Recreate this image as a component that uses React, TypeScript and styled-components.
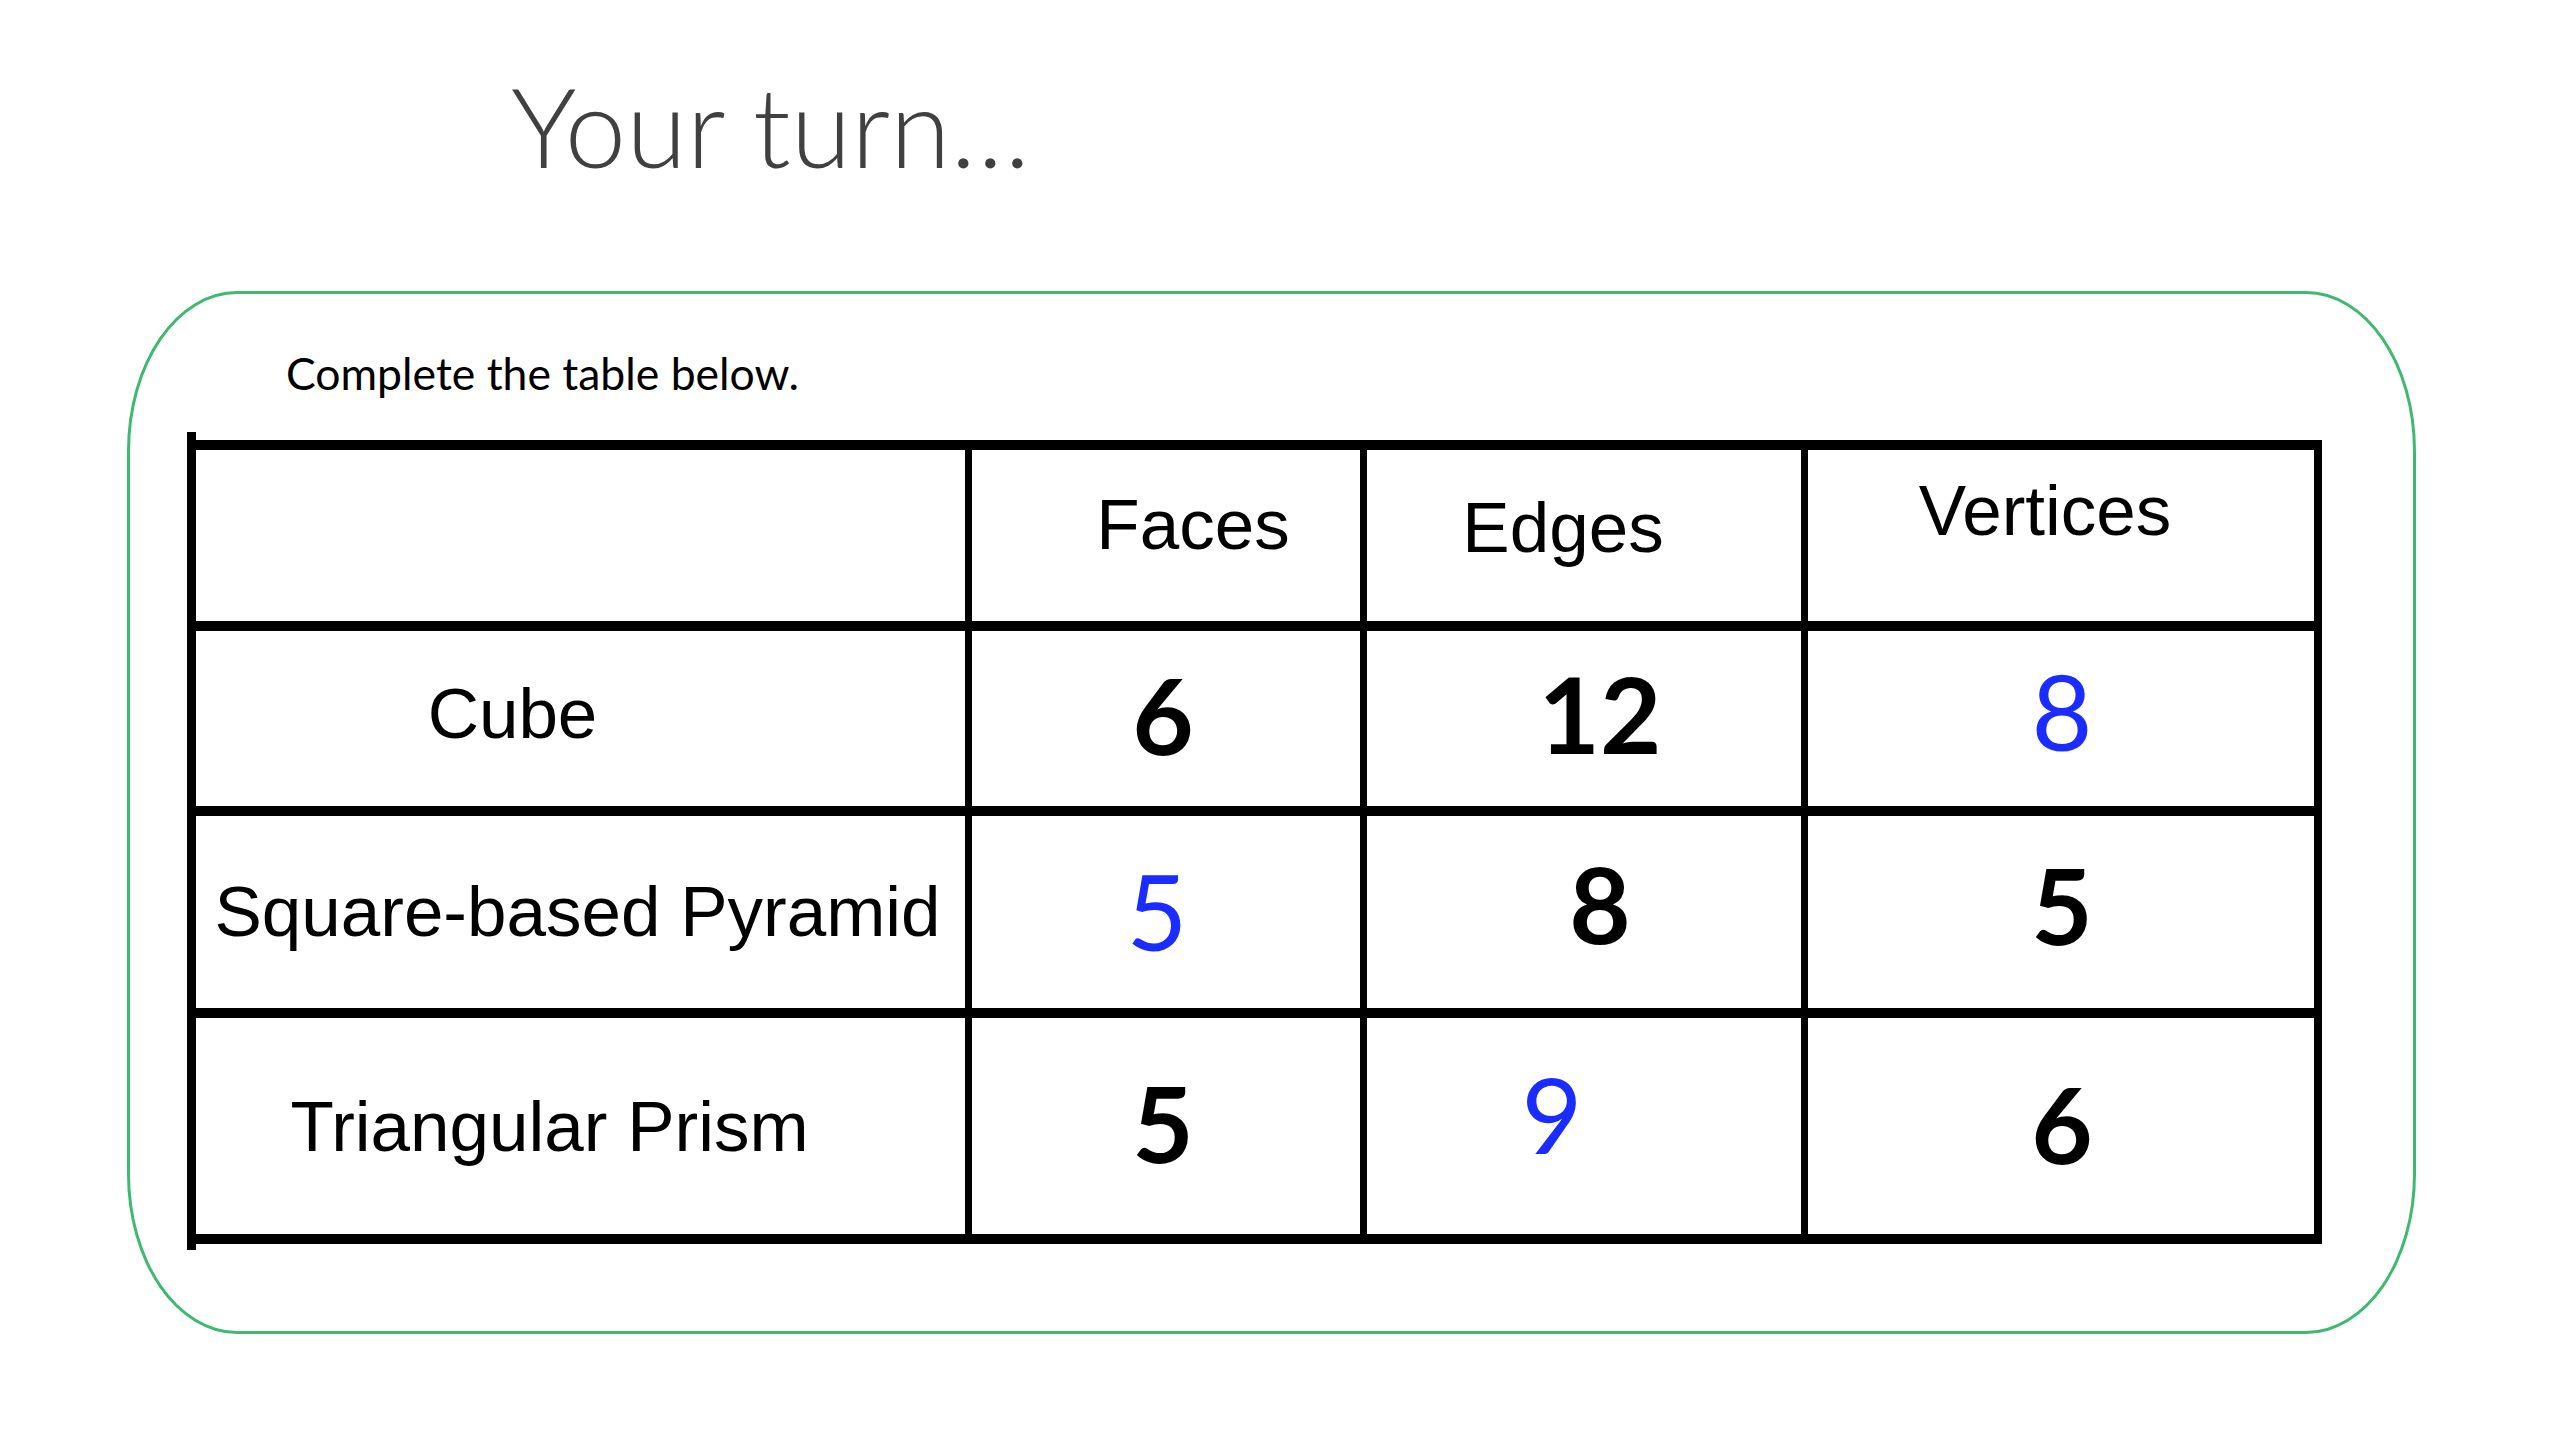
import React from 'react';
import styled, { createGlobalStyle } from 'styled-components';

interface ICell {
  text: string;
  kind: 'label' | 'num' | 'answer' | 'empty';
  dx?: number;
  dy?: number;
}

const rows: ICell[][] = [
  [
    { text: '', kind: 'empty' },
    { text: 'Faces', kind: 'label', dx: 27, dy: -11 },
    { text: 'Edges', kind: 'label', dx: -21, dy: -8 },
    { text: 'Vertices', kind: 'label', dx: -16, dy: -25 },
  ],
  [
    { text: 'Cube', kind: 'label', dx: -68, dy: -5 },
    { text: '6', kind: 'num', dx: -3, dy: -5 },
    { text: '12', kind: 'num', dx: 16, dy: -6 },
    { text: '8', kind: 'answer', dx: 1, dy: -8 },
  ],
  [
    { text: 'Square-based Pyramid', kind: 'label', dx: -3, dy: -1 },
    { text: '5', kind: 'answer', dx: -9, dy: -2 },
    { text: '8', kind: 'num', dx: 16, dy: -9 },
    { text: '5', kind: 'num', dx: 1, dy: -8 },
  ],
  [
    { text: 'Triangular Prism', kind: 'label', dx: -31, dy: 0 },
    { text: '5', kind: 'num', dx: -3, dy: -4 },
    { text: '9', kind: 'answer', dx: -32, dy: -13 },
    { text: '6', kind: 'num', dx: 1, dy: -3 },
  ],
];

function App() {
  return (
    <>
      <GlobalStyle />
      <Page>
        <Title>Your turn…</Title>
        <Card>
          <Instruction>Complete the table below.</Instruction>
          <Table>
            {rows.map((row, r) =>
              row.map((cell, c) => (
                <Cell key={`${r}-${c}`}>
                  {cell.kind !== 'empty' && (
                    <CellText $kind={cell.kind} $dx={cell.dx ?? 0} $dy={cell.dy ?? 0}>
                      {cell.text}
                    </CellText>
                  )}
                </Cell>
              ))
            )}
          </Table>
        </Card>
      </Page>
    </>
  );
}

const GlobalStyle = createGlobalStyle`
  html, body {
    margin: 0;
    padding: 0;
    background: #ffffff;
  }
  * {
    box-sizing: border-box;
  }
`;

const Page = styled.div`
  width: 2560px;
  height: 1440px;
  background: #ffffff;
  padding-top: 59px;
  overflow: hidden;
`;

const Title = styled.h1`
  margin: 0;
  padding-left: 511px;
  font-family: Lato, 'Open Sans', sans-serif;
  font-weight: 300;
  font-size: 110px;
  line-height: 1.2;
  color: #404040;
`;

const Card = styled.div`
  margin-top: 100px;
  margin-left: 127px;
  width: 2289px;
  height: 1043px;
  border: 3px solid #3dba6f;
  border-radius: 110px / 160px;
  padding-top: 52px;
  padding-left: 57px;
`;

const Instruction = styled.p`
  margin: 0 0 41px 99px;
  font-family: Lato, 'Open Sans', sans-serif;
  font-size: 44.5px;
  line-height: 1.2;
  color: #000000;
`;

const Table = styled.div`
  position: relative;
  display: grid;
  width: 2135px;
  height: 804px;
  grid-template-columns: 769px 388px 434px 1fr;
  grid-template-rows: 171px 175px 192px 1fr;
  column-gap: 7px;
  row-gap: 10px;
  padding: 10px 8px 10px 9px;
  background: #000000;

  /* the hand-drawn left rule runs a little past the top and bottom */
  &::before {
    content: '';
    position: absolute;
    left: 0;
    top: -8px;
    bottom: -6px;
    width: 9px;
    background: #000000;
  }
`;

const Cell = styled.div`
  background: #ffffff;
  display: flex;
  align-items: center;
  justify-content: center;
  overflow: visible;
`;

const CellText = styled.span<{ $kind: string; $dx: number; $dy: number }>`
  display: block;
  line-height: 1;
  white-space: nowrap;
  transform: translate(${p => p.$dx}px, ${p => p.$dy}px);
  font-family: ${p => (p.$kind === 'label' ? "'Liberation Sans', Arial, sans-serif" : "Lato, 'Open Sans', sans-serif")};
  font-size: ${p => (p.$kind === 'label' ? '71px' : p.$kind === 'num' ? '106px' : '105px')};
  font-weight: ${p => (p.$kind === 'num' ? 700 : 400)};
  color: ${p => (p.$kind === 'answer' ? '#1a2cff' : '#000000')};
`;

export default App;
